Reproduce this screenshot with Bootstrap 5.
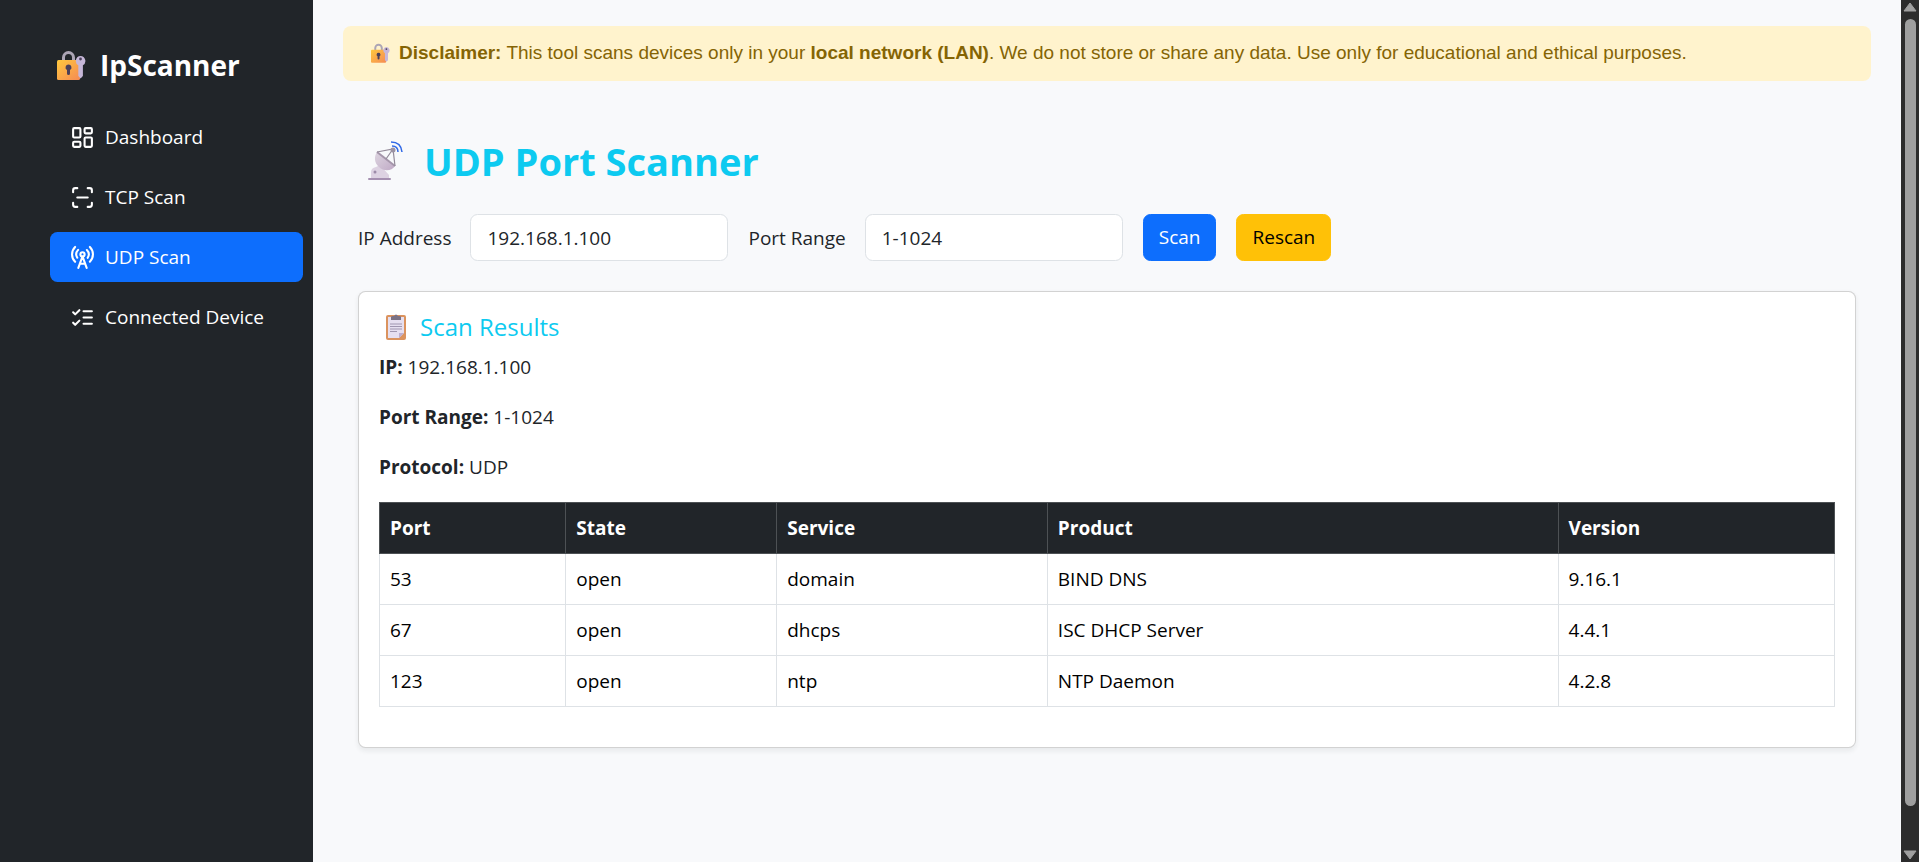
<!DOCTYPE html>
<html lang="en">
<head>
<meta charset="utf-8">
<meta name="viewport" content="width=device-width, initial-scale=1">
<title>IpScanner - UDP Port Scanner</title>
<link href="https://cdn.jsdelivr.net/npm/bootstrap@5.3.0/dist/css/bootstrap.min.css" rel="stylesheet">
<style>
  html { font-size: 20px; }
  body { font-family: "Open Sans", "Noto Sans", sans-serif; font-size: 19px; line-height: 30px; background: #f8f9fb; }
  .sidebar { width: 313px; padding: 40px 10px 20px 50px; }
  .brand { font-size: 28px; line-height: 50px; gap: 14px; padding-left: 7px; }
  .sidebar .nav { gap: 10px; margin-top: 22px; }
  .sidebar .nav-link { padding: 10px 20px; gap: 10px; color: #fff; font-size: 19px; }
  .nav-link svg { width: 25px; height: 25px; fill: none; stroke: currentColor; stroke-width: 2; stroke-linecap: round; stroke-linejoin: round; }
  .main-area { padding: 26px 30px; }
  .notice { background: #fff3cd; color: #856404; border-radius: 8px; padding: 11px 28px 13px; font: 19px/31px "Liberation Sans", Arial, sans-serif; gap: 9px; }
  .scanner { padding: 55px 15px 0; }
  .page-title { font-size: 38px; line-height: 50px; gap: 20px; padding-left: 10px; margin-bottom: 28px; }
  .scan-form { gap: 20px; }
  .field { gap: 19px; }
  .scan-form .form-control { width: 258px; height: 47px; padding: 0 16px; font-size: 19px; }
  .scan-form .btn { height: 47px; padding: 0 15px; font-size: 19px; }
  .results { margin-top: 30px; }
  .results-title { font-size: 24px; line-height: 30px; gap: 11px; padding-left: 4px; margin-bottom: 10px; font-weight: 500; }
  .results p { margin-bottom: 20px; }
  .scan-table { margin-bottom: 20px; }
  .scan-table th, .scan-table td { padding: 10px; }
  .scan-table td { color: #000; }
  .scan-table .table-dark { border-color: #4d5154; }
  .scroll-strip { width: 18px; height: 100vh; background: #2c2c2c; padding: 2px 0; }
  .scroll-thumb { width: 11px; margin: 7px 0 44px; border-radius: 6px; background: #9f9f9f; }
</style>
</head>
<body>
<svg class="position-absolute" width="0" height="0" aria-hidden="true">
  <defs>
    <linearGradient id="gold" x1="0" y1="0" x2="1" y2="1"><stop offset="0" stop-color="#ffc83d"/><stop offset="1" stop-color="#f58a54"/></linearGradient>
    <linearGradient id="dish" x1="0" y1="0" x2="1" y2="1"><stop offset="0" stop-color="#ddd5e0"/><stop offset="1" stop-color="#c0aac6"/></linearGradient>
    <symbol id="lock-key" viewBox="0 0 29 30">
      <path d="M6.500 12V7.500a5 5 0 0 1 10 0V12" fill="none" stroke="#aca5b5" stroke-width="3"/>
      <rect y="10" width="23" height="20" rx="1.500" fill="url(#gold)"/>
      <path d="M11.500 14.500a3 3 0 0 1 1.500 5.600V23.500a1.500 1.500 0 0 1-3 0V20.100a3 3 0 0 1 1.500-5.600z" fill="#4a4058"/>
      <path d="M23.500 6a5 5 0 0 1 2.400 9.300V26l-2.300 2.400L21.300 26V15.300A5 5 0 0 1 23.500 6z" fill="#c6b7d8"/>
      <circle cx="23.500" cy="9" r="1.400" fill="#4a4058"/>
    </symbol>
  </defs>
</svg>
<div class="d-flex min-vh-100">
  <aside class="sidebar bg-dark text-white flex-shrink-0">
    <div class="brand d-flex align-items-center fw-bold">
      <svg width="29" height="30" aria-hidden="true"><use href="#lock-key"/></svg><span>IpScanner</span>
    </div>
    <nav class="nav nav-pills flex-column">
      <a class="nav-link d-flex align-items-center" href="#"><svg viewBox="0 0 24 24"><rect x="3" y="3" width="7" height="9" rx="1"/><rect x="14" y="3" width="7" height="5" rx="1"/><rect x="14" y="12" width="7" height="9" rx="1"/><rect x="3" y="16" width="7" height="5" rx="1"/></svg><span>Dashboard</span></a>
      <a class="nav-link d-flex align-items-center" href="#"><svg viewBox="0 0 24 24"><path d="M3 7V5a2 2 0 0 1 2-2h2M17 3h2a2 2 0 0 1 2 2v2M21 17v2a2 2 0 0 1-2 2h-2M7 21H5a2 2 0 0 1-2-2v-2M7 12h10"/></svg><span>TCP Scan</span></a>
      <a class="nav-link active d-flex align-items-center" href="#" aria-current="page"><svg viewBox="0 0 24 24"><path d="M4.900 16.100C1 12.200 1 5.800 4.900 1.900M7.800 4.700a6.140 6.140 0 0 0-.8 7.500M16.200 4.800c2 2 2.260 5.110.8 7.470M19.100 1.900a9.960 9.960 0 0 1 0 14.100M9.500 18h5M8 22l4-11 4 11"/><circle cx="12" cy="9" r="2"/></svg><span>UDP Scan</span></a>
      <a class="nav-link d-flex align-items-center" href="#"><svg viewBox="0 0 24 24"><path d="m3 17 2 2 4-4M3 7l2 2 4-4M13 6h8M13 12h8M13 18h8"/></svg><span>Connected Device</span></a>
    </nav>
  </aside>
  <main class="main-area flex-grow-1">
    <div class="notice d-flex align-items-center" role="note">
      <svg class="flex-shrink-0" width="19" height="20" aria-hidden="true"><use href="#lock-key"/></svg>
      <span><strong>Disclaimer:</strong> This tool scans devices only in your <strong>local network (LAN)</strong>. We do not store or share any data. Use only for educational and ethical purposes.</span>
    </div>
    <div class="scanner">
      <h1 class="page-title d-flex align-items-center fw-bold text-info">
        <svg width="36" height="40" viewBox="0 0 36 40" aria-hidden="true">
          <path d="M3 37V31q0-4 5-5l4-2 9 10v3z" fill="#ddd2e2"/><rect y="37" width="23" height="2" rx="1" fill="#a58fb0"/><circle cx="7" cy="31" r="1.500" fill="#9c8ba8"/>
          <path d="M9 11 27 25C24 30 16 31 11 26 6 22 6 15 9 11z" fill="url(#dish)"/><path d="M9 11 27 25" stroke="#a596ab" stroke-width="2"/>
          <path d="M9 11 25 8l2 17M25 8l-7 10" fill="none" stroke="#938a99" stroke-width="1.200"/><circle cx="25" cy="9" r="2.500" fill="#9b93a3"/>
          <path d="M23 1q10 0 11 10M24 5q6 0 6 6" fill="none" stroke="#3068e6" stroke-width="1.500"/>
        </svg>
        <span>UDP Port Scanner</span>
      </h1>
      <form class="scan-form d-flex flex-wrap align-items-center">
        <div class="field d-flex align-items-center">
          <label for="ip">IP Address</label>
          <input class="form-control" id="ip" type="text" value="192.168.1.100">
        </div>
        <div class="field d-flex align-items-center">
          <label for="range">Port Range</label>
          <input class="form-control" id="range" type="text" value="1-1024">
        </div>
        <button class="btn btn-primary" type="button">Scan</button>
        <button class="btn btn-warning" type="button">Rescan</button>
      </form>
      <section class="results card shadow-sm">
        <div class="card-body">
          <h2 class="results-title d-flex align-items-center text-info">
            <svg width="26" height="26" viewBox="0 0 26 26" aria-hidden="true">
              <rect x="3" y="1" width="20" height="25" rx="2" fill="#db935e"/><path d="M5 3h16v16l-5 5H5z" fill="#e6dff0"/><path d="M16 24v-5h5z" fill="#bcaed0"/><path d="M8 6V3q0-1 2-1h1q2-3 4 0h1q2 0 2 1v3z" fill="#7b7285"/><path d="M7 10h12M7 12.500h12M7 15h12M7 17.500h7" stroke="#a096b0"/>
            </svg>
            <span>Scan Results</span>
          </h2>
          <p><strong>IP:</strong> 192.168.1.100</p>
          <p><strong>Port Range:</strong> 1-1024</p>
          <p><strong>Protocol:</strong> UDP</p>
          <table class="scan-table table table-bordered">
            <colgroup><col style="width:12.8%"><col style="width:14.5%"><col style="width:18.6%"><col style="width:35.1%"><col style="width:19%"></colgroup>
            <thead class="table-dark"><tr><th scope="col">Port</th><th scope="col">State</th><th scope="col">Service</th><th scope="col">Product</th><th scope="col">Version</th></tr></thead>
            <tbody>
              <tr><td>53</td><td>open</td><td>domain</td><td>BIND DNS</td><td>9.16.1</td></tr>
              <tr><td>67</td><td>open</td><td>dhcps</td><td>ISC DHCP Server</td><td>4.4.1</td></tr>
              <tr><td>123</td><td>open</td><td>ntp</td><td>NTP Daemon</td><td>4.2.8</td></tr>
            </tbody>
          </table>
        </div>
      </section>
    </div>
  </main>
  <div class="scroll-strip sticky-top d-flex flex-column align-items-center flex-shrink-0" aria-hidden="true">
    <svg class="flex-shrink-0" width="14" height="10" viewBox="0 0 14 10"><path d="M1 9 7 1l6 8z" fill="#9f9f9f" stroke="#9f9f9f" stroke-linejoin="round"/></svg>
    <div class="scroll-thumb flex-grow-1"></div>
    <svg class="flex-shrink-0" width="14" height="10" viewBox="0 0 14 10"><path d="M1 1h12L7 9z" fill="#9f9f9f" stroke="#9f9f9f" stroke-linejoin="round"/></svg>
  </div>
</div>
<script src="https://cdn.jsdelivr.net/npm/bootstrap@5.3.0/dist/js/bootstrap.bundle.min.js"></script>
</body>
</html>
